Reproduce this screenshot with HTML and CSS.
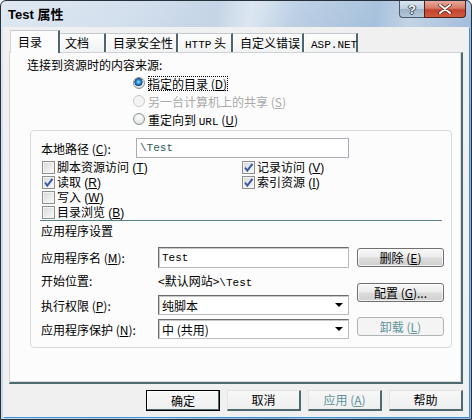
FILE: index.html
```html
<!DOCTYPE html>
<html lang="zh-CN">
<head>
<meta charset="utf-8">
<title>Test 属性</title>
<link rel="stylesheet" href="styles.css">
</head>
<body>
<div class="window">
  <div class="titlebar">
    <div class="title">Test 属性</div>
    <div class="caps">
      <div class="cap help">?</div>
      <div class="cap close">
        <svg width="14" height="10" viewBox="0 0 14 10">
          <path d="M2 1 L12 9 M12 1 L2 9" stroke="#4a1c14" stroke-width="3.4" stroke-linecap="round"/>
          <path d="M2 1 L12 9 M12 1 L2 9" stroke="#ffffff" stroke-width="2" stroke-linecap="round"/>
        </svg>
      </div>
    </div>
  </div>
  <div class="client">
    <div class="tabs">
      <div class="tab sel">目录</div>
      <div class="tab t2">文档</div>
      <div class="tab t3">目录安全性</div>
      <div class="tab t4"><span class="m">HTTP</span> 头</div>
      <div class="tab t5">自定义错误</div>
      <div class="tab t6"><span class="m">ASP.NET</span></div>
    </div>
    <div class="panel">
      <div class="src-label">连接到资源时的内容来源:</div>
      <div class="radios">
        <div class="radio-row"><span class="rd on"></span><span class="focus">指定的目录 (<u>D</u>)</span></div>
        <div class="radio-row dis"><span class="rd off"></span><span class="rt">另一台计算机上的共享 (<u>S</u>)</span></div>
        <div class="radio-row"><span class="rd"></span><span class="rt">重定向到 <span class="m">URL</span> (<u>U</u>)</span></div>
      </div>
      <div class="group">
        <div class="path-row">
          <span class="lbl path-lbl">本地路径 (<u>C</u>):</span>
          <div class="field path-field"><span class="m">\Test</span></div>
        </div>
        <div class="checks">
          <div class="ck"><span class="cb"></span><span class="ct">脚本资源访问 (<u>T</u>)</span></div>
          <div class="ck rc"><span class="cb on"><svg width="11" height="11" viewBox="0 0 11 11"><path d="M2 5.5 L4.3 8.5 L9.5 1.8" fill="none" stroke="#3d5aa8" stroke-width="2"/></svg></span><span class="ct">记录访问 (<u>V</u>)</span></div>
          <div class="ck"><span class="cb on"><svg width="11" height="11" viewBox="0 0 11 11"><path d="M2 5.5 L4.3 8.5 L9.5 1.8" fill="none" stroke="#3d5aa8" stroke-width="2"/></svg></span><span class="ct">读取 (<u>R</u>)</span></div>
          <div class="ck rc"><span class="cb on"><svg width="11" height="11" viewBox="0 0 11 11"><path d="M2 5.5 L4.3 8.5 L9.5 1.8" fill="none" stroke="#3d5aa8" stroke-width="2"/></svg></span><span class="ct">索引资源 (<u>I</u>)</span></div>
          <div class="ck"><span class="cb"></span><span class="ct">写入 (<u>W</u>)</span></div>
          <div></div>
          <div class="ck"><span class="cb"></span><span class="ct">目录浏览 (<u>B</u>)</span></div>
          <div></div>
        </div>
        <div class="sep"></div>
        <div class="section">应用程序设置</div>
        <div class="app">
          <div class="app-fields">
            <div class="arow r1"><span class="lbl">应用程序名 (<u>M</u>):</span><div class="field sunk"><span class="m">Test</span></div></div>
            <div class="arow r2"><span class="lbl">开始位置:</span><span class="start">&lt;默认网站&gt;<span class="m">\Test</span></span></div>
            <div class="arow r3"><span class="lbl">执行权限 (<u>P</u>):</span><div class="field sunk select"><span>纯脚本</span><i class="arrow"></i></div></div>
            <div class="arow r4"><span class="lbl">应用程序保护 (<u>N</u>):</span><div class="field sunk select"><span>中 (共用)</span><i class="arrow"></i></div></div>
          </div>
          <div class="app-btns">
            <div class="pbtn b1">删除 (<u>E</u>)</div>
            <div class="pbtn b2">配置 (<u>G</u>)...</div>
            <div class="pbtn b3 dis">卸载 (<u>L</u>)</div>
          </div>
        </div>
      </div>
    </div>
    <div class="footer">
      <div class="btn def">确定</div>
      <div class="btn">取消</div>
      <div class="btn dis">应用 (<u>A</u>)</div>
      <div class="btn">帮助</div>
    </div>
  </div>
</div>
</body>
</html>
```

FILE: styles.css
```css
* { box-sizing: border-box; }
html, body { margin: 0; padding: 0; }
body {
  width: 472px;
  height: 420px;
  overflow: hidden;
  background: #ffffff;
  font-family: "Noto Sans CJK SC", "Noto Sans", sans-serif;
  font-size: 12px;
  color: #000;
}
u { text-decoration: underline; text-underline-offset: 1px; }
.m { font-family: "Liberation Mono", monospace; font-size: 11px; }

.window {
  width: 472px;
  height: 420px;
  border: 1px solid #26313c;
  border-radius: 6px 6px 0 0;
  padding: 0 2px 2px 2px;
  display: flex;
  flex-direction: column;
  background:
    linear-gradient(180deg, rgba(255,255,255,0.25) 0%, rgba(255,255,255,0) 40%),
    linear-gradient(104deg, #d5e1ee 0%, #c6d6e8 22%, #b3c8df 38%, #d2dfed 44%, #a9c2dc 52%, #8eafd2 66%, #b2c8e0 72%, #84a8cf 84%, #9cb8d7 100%);
}

.titlebar {
  height: 26px;
  display: flex;
  align-items: flex-start;
  flex: none;
}
.title {
  line-height: 27px;
  padding-left: 5px;
  font-family: "Liberation Sans", "Noto Sans CJK SC", sans-serif;
  font-weight: bold;
  font-size: 13px;
  color: #000;
}
.caps {
  margin-left: auto;
  margin-right: 3px;
  display: flex;
}
.cap {
  height: 17px;
  display: flex;
  align-items: center;
  justify-content: center;
}
.help {
  width: 25px;
  border: 1px solid #4a5a6c;
  border-top: none;
  border-right: none;
  border-radius: 0 0 0 4px;
  background: linear-gradient(180deg, #d9e4ef 0%, #bfcfdf 48%, #9fb4ca 52%, #b6c8da 100%);
  color: #fff;
  font-family: "Liberation Sans", sans-serif;
  font-weight: bold;
  font-size: 13px;
  text-shadow: 0 0 1px #2d3a48, 1px 0 0 #3a4a5a, -1px 0 0 #3a4a5a, 0 1px 0 #3a4a5a;
}
.close {
  width: 42px;
  border: 1px solid #4f2119;
  border-top: none;
  border-radius: 0 0 4px 0;
  background: linear-gradient(180deg, #e7a99b 0%, #d77a66 45%, #c2432c 55%, #cf5a3e 100%);
}

.client {
  flex: 1;
  background: #f0f0f0;
  box-shadow: 1px 1px 0 #3a93d8;
}

/* tabs */
.tabs {
  display: flex;
  align-items: flex-end;
  height: 25px;
  padding-left: 7px;
}
.tab {
  height: 19px;
  line-height: 17px;
  padding-left: 6px;
  white-space: nowrap;
  background: linear-gradient(180deg, #fdfdfd 0%, #f1f2f3 100%);
  border-top: 1px solid #c3c9ce;
  border-left: 1px solid #ffffff;
  border-right: 2px solid #4e666b;
}
.tab.sel {
  width: 50px;
  height: 23px;
  line-height: 21px;
  padding-left: 7px;
  margin-bottom: -1px;
  position: relative;
  z-index: 1;
  background: #fcfcfc;
  border-left: 1px solid #d0d4d8;
}
.t2 { width: 46px; padding-left: 4px; }
.t3 { width: 72px; }
.t4 { width: 55px; }
.t5 { width: 71px; }
.t6 { width: 54px; }

/* panel */
.panel {
  margin-left: 6px;
  width: 454px;
  height: 332px;
  background: #fcfcfc;
  border-top: 1px solid #cfd3d6;
  border-left: 1px solid #cfd3d6;
  border-right: 2px solid #4e6a70;
  border-bottom: 2px solid #4e6a70;
  box-shadow: inset -1px -1px 0 #dcdcdc;
  padding: 3px 0 0 10px;
}
.src-label {
  line-height: 18px;
  margin-left: 7px;
}
.radios { margin-left: 113px; }
.radio-row {
  height: 18px;
  display: flex;
  align-items: center;
}
.radio-row.dis { color: #a9a9a9; }
.rt, .focus {
  display: inline-block;
  height: 15px;
  line-height: 15px;
  white-space: nowrap;
}
.rd {
  width: 12px;
  height: 12px;
  border-radius: 50%;
  border: 1px solid #8a9296;
  background: radial-gradient(circle at 50% 35%, #ffffff 0%, #e9eaeb 55%, #cdd0d3 100%);
  margin-right: 3px;
  flex: none;
}
.rd.on {
  background:
    radial-gradient(circle at 45% 40%, #b8ecff 0px, #3aa2e6 1.6px, #1c5fa8 3.2px, #173f78 3.9px, rgba(0,0,0,0) 4.3px),
    radial-gradient(circle at 50% 35%, #ffffff 0%, #e9eaeb 55%, #cdd0d3 100%);
}
.rd.off {
  border-color: #c6cacd;
  background: #f4f4f4;
}
.focus {
  outline: 1px dotted #000;
  outline-offset: -1px;
  padding: 0 1px 0 0;
}

/* group box */
.group {
  margin-top: 2px;
  margin-left: 10px;
  width: 422px;
  border: 1px solid #d3dbe0;
  border-radius: 4px;
  padding: 7px 0 8px 10px;
}
.lbl { white-space: nowrap; flex: none; }
.path-row {
  display: flex;
  align-items: center;
  height: 20px;
}
.path-lbl { width: 95px; }
.field {
  background: #fff;
  display: flex;
  align-items: center;
  white-space: nowrap;
}
.path-field {
  width: 213px;
  height: 20px;
  border: 1px solid #a7adb3;
  padding-left: 3px;
  color: #2f5d60;
}
.checks {
  margin-top: 2px;
  display: grid;
  grid-template-columns: 200px 1fr;
  grid-auto-rows: 15px;
}
.ck {
  display: flex;
  align-items: center;
  height: 15px;
  white-space: nowrap;
  font-family: "Liberation Sans", "Noto Sans CJK SC", sans-serif;
}
.ct {
  display: inline-block;
  line-height: 14px;
}
.cb {
  width: 13px;
  height: 13px;
  flex: none;
  margin: 0 2px 0 1px;
  border: 1px solid #8e8f8f;
  box-shadow: inset 0 0 0 1px #f4f4f4;
  background: linear-gradient(135deg, #d6d8da 0%, #eceded 60%, #fafafa 100%);
  display: flex;
  align-items: center;
  justify-content: center;
}
.sep {
  height: 1px;
  width: 402px;
  margin-left: -1px;
  background: #5b7f86;
}
.section { line-height: 20px; }

.app {
  display: flex;
  margin-top: 6px;
}
.app-fields { width: 308px; }
.arow {
  display: flex;
  align-items: center;
}
.arow .lbl { width: 117px; }
.r1 { height: 21px; }
.r2 { height: 24px; }
.r3 { height: 20px; margin-top: 3px; }
.r4 { height: 20px; margin-top: 4px; }
.sunk {
  width: 191px;
  height: 100%;
  border-top: 1px solid #6d6d6d;
  border-left: 1px solid #6d6d6d;
  border-right: 1px solid #b9bcbf;
  border-bottom: 1px solid #b9bcbf;
  box-shadow: inset 1px 1px 0 #c8c8c8;
  padding-left: 3px;
}
.select { justify-content: space-between; padding-right: 5px; }
.arrow {
  width: 0;
  height: 0;
  border-left: 4px solid transparent;
  border-right: 4px solid transparent;
  border-top: 4px solid #000;
}
.start { white-space: nowrap; }

.app-btns {
  width: 87px;
  margin-left: 8px;
  display: flex;
  flex-direction: column;
}
.pbtn {
  height: 19px;
  border: 1px solid #6f6f6f;
  border-radius: 3px;
  background: linear-gradient(180deg, #f7f7f7 0%, #ececec 48%, #dcdcdc 52%, #d0d0d0 100%);
  box-shadow: inset 0 0 0 1px rgba(255,255,255,0.7);
  text-align: center;
  line-height: 17px;
  white-space: nowrap;
}
.b1 { margin-top: 1px; }
.b2 { margin-top: 16px; }
.b3 { margin-top: 15px; }
.pbtn.dis {
  border-color: #afb4b7;
  background: #f4f4f4;
  box-shadow: none;
  color: #5f9399;
}

/* footer */
.footer {
  display: flex;
  justify-content: flex-end;
  gap: 7px;
  padding: 6px 6px 0 0;
}
.btn {
  width: 74px;
  height: 21px;
  background: linear-gradient(180deg, #f7f7f7 0%, #efefef 100%);
  border-top: 1px solid #e4e4e4;
  border-left: 1px solid #e4e4e4;
  border-right: 2px solid #4d6a70;
  border-bottom: 2px solid #4d6a70;
  text-align: center;
  line-height: 18px;
  white-space: nowrap;
}
.btn.def {
  border: 1px solid #000;
  box-shadow: inset -1px -1px 0 #4d6a70, inset 1px 1px 0 #ffffff;
  line-height: 19px;
}
.btn.dis { color: #5f9399; }
```
